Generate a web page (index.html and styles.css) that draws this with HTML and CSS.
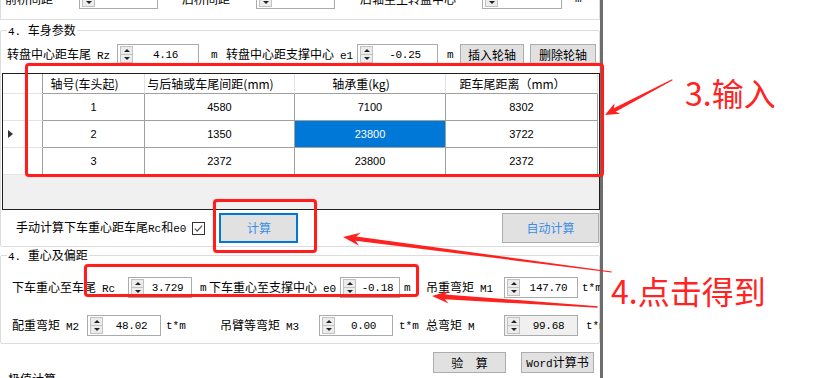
FILE: index.html
```html
<!DOCTYPE html>
<html lang="zh-CN">
<head>
    <meta charset="UTF-8">
    <meta name="viewport" content="width=device-width, initial-scale=1.0">
    <title>车身参数</title>
    <link rel="stylesheet" href="styles.css">
</head>
<body>
<div class="page">

    <div class="app">

        <!-- 上一组，只露出底部 -->
        <div class="group group-cut">
            <div class="row row-cut">
                <span class="lbl w74">前桥间距</span>
                <div class="spin w79"><span class="arrows"><i></i><i></i></span><span class="val"></span></div>
                <span class="lbl w98 pl24">后桥间距</span>
                <div class="spin w79"><span class="arrows"><i></i><i></i></span><span class="val"></span></div>
                <span class="lbl w147 pl25">后轴至主转盘中心</span>
                <div class="spin w80"><span class="arrows"><i></i><i></i></span><span class="val"></span></div>
                <span class="unit pl13">m</span>
            </div>
        </div>

        <!-- 4. 车身参数 -->
        <div class="group g-body">
            <div class="gtitle"><span class="en">4. </span>车身参数</div>
            <div class="row row-rz">
                <span class="lbl w110">转盘中心距车尾<span class="tag">Rz</span></span>
                <div class="spin w82"><span class="arrows"><i></i><i></i></span><span class="val">4.16</span></div>
                <span class="unit w27 pl12">m</span>
                <span class="lbl w131">转盘中心距支撑中心<span class="tag">e1</span></span>
                <div class="spin w81"><span class="arrows"><i></i><i></i></span><span class="val">-0.25</span></div>
                <span class="unit w22 pl9">m</span>
                <button class="btn w64">插入轮轴</button>
                <button class="btn w66 ml6">删除轮轴</button>
            </div>

            <!-- 轮轴表格 -->
            <div class="grid">
                <div class="gr head">
                    <div class="c rh"></div>
                    <div class="c">轴号(车头起)</div>
                    <div class="c">与后轴或车尾间距(mm)</div>
                    <div class="c">轴承重(kg)</div>
                    <div class="c">距车尾距离（mm）</div>
                </div>
                <div class="gr">
                    <div class="c rh"></div>
                    <div class="c">1</div>
                    <div class="c">4580</div>
                    <div class="c">7100</div>
                    <div class="c">8302</div>
                </div>
                <div class="gr">
                    <div class="c rh"><i class="cur"></i></div>
                    <div class="c">2</div>
                    <div class="c">1350</div>
                    <div class="c sel">23800</div>
                    <div class="c">3722</div>
                </div>
                <div class="gr">
                    <div class="c rh"></div>
                    <div class="c">3</div>
                    <div class="c">2372</div>
                    <div class="c">23800</div>
                    <div class="c">2372</div>
                </div>
            </div>

            <div class="row row-calc">
                <span class="lbl">手动计算下车重心距车尾<span class="en">Rc</span>和<span class="en">e0</span></span>
                <svg class="check" width="13" height="13" viewBox="0 0 13 13">
                    <rect x="0.5" y="0.5" width="12" height="12" fill="#fff" stroke="#333"/>
                    <polyline points="2.8,6.6 5.2,9 10.2,3.6" fill="none" stroke="#5a5a5a" stroke-width="1.3"/>
                </svg>
                <button class="btn big focus">计算</button>
                <button class="btn big auto">自动计算</button>
            </div>
        </div>

        <!-- 4. 重心及偏距 -->
        <div class="group g-cg">
            <div class="gtitle"><span class="en">4. </span>重心及偏距</div>
            <div class="row row-m1">
                <span class="lbl w116">下车重心至车尾<span class="tag">Rc</span></span>
                <div class="spin w64"><span class="arrows"><i></i><i></i></span><span class="val">3.729</span></div>
                <span class="unit w17 pl8">m</span>
                <span class="lbl w131">下车重心至支撑中心<span class="tag">e0</span></span>
                <div class="spin w60"><span class="arrows"><i></i><i></i></span><span class="val">-0.18</span></div>
                <span class="unit w26 pl4">m</span>
                <span class="lbl w78">吊重弯矩<span class="tag">M1</span></span>
                <div class="spin w74"><span class="arrows"><i></i><i></i></span><span class="val">147.70</span></div>
                <span class="unit pl4">t*m</span>
            </div>
            <div class="row row-m2">
                <span class="lbl w75">配重弯矩<span class="tag">M2</span></span>
                <div class="spin w74"><span class="arrows"><i></i><i></i></span><span class="val">48.02</span></div>
                <span class="unit w59 pl5">t*m</span>
                <span class="lbl w99">吊臂等弯矩<span class="tag">M3</span></span>
                <div class="spin w74"><span class="arrows"><i></i><i></i></span><span class="val">0.00</span></div>
                <span class="unit w33 pl6">t*m</span>
                <span class="lbl w78">总弯矩<span class="tag">M</span></span>
                <div class="spin w74 ro"><span class="arrows"><i></i><i></i></span><span class="val">99.68</span></div>
                <span class="unit pl8">t*m</span>
            </div>
        </div>

        <div class="row row-btns">
            <button class="btn w73 wide">验 算</button>
            <button class="btn w73 ml15"><span class="en">Word</span>计算书</button>
        </div>

        <div class="group g-max">
            <div class="gtitle">极值计算</div>
        </div>

    </div>

    <!-- 标注 -->
    <div class="marks">
        <div class="mark-box box-grid"></div>
        <div class="mark-box box-calc"></div>
        <div class="mark-box box-result"></div>
        <svg class="pointers" width="820" height="378" viewBox="0 0 820 378">
            <g fill="#ff2020">
                <polygon transform="translate(605 115) rotate(-27.6)" points="0,0 14,-6 11,-2 76,-0.6 76,0.6 11,2 14,6"/>
                <polygon transform="translate(343 237) rotate(7.4)" points="0,0 17,-6.5 13,-2.2 271,-0.5 271,0.5 13,2.2 17,6.5"/>
                <polygon transform="translate(432 296) rotate(3.8)" points="0,0 17,-6.5 13,-2.4 166,-0.8 166,0.8 13,2.4 17,6.5"/>
            </g>
        </svg>
        <div class="note note-input">3.输入</div>
        <div class="note note-click">4.点击得到</div>
    </div>

</div>
</body>
</html>
```

FILE: styles.css
```css
* {
    box-sizing: border-box;
}
body {
    margin: 0;
    background: #fff;
    font-family: "Noto Sans CJK SC", "Liberation Sans", sans-serif;
    font-size: 12px;
    color: #000;
}
.page {
    position: relative;
    width: 820px;
    height: 378px;
    overflow: hidden;
}
.app {
    width: 603px;
    height: 378px;
    border-right: 3px solid #6d6d6d;
    overflow: hidden;
    background: #fff;
}

/* 等宽的英文/数字部分 */
.en, .tag, .unit, .val {
    font-family: "Liberation Mono", "DejaVu Sans Mono", monospace;
    font-size: 11px;
}
.tag {
    margin-left: 6px;
}

/* 分组框 */
.group {
    border: 1px solid #dcdcdc;
    border-radius: 2px;
}
.group-cut {
    height: 20px;
    border-top: 0;
    border-radius: 0;
    overflow: hidden;
}
.gtitle {
    width: fit-content;
    margin: -8px 0 0 6px;
    padding: 0 1px;
    line-height: 14px;
    background: #fff;
    white-space: pre;
}
.g-body {
    margin-top: 10px;
    padding-bottom: 3px;
}
.g-cg {
    margin-top: 8px;
    padding-bottom: 7px;
}
.g-max {
    margin-top: 6px;
    height: 30px;
}

/* 行 */
.row {
    display: flex;
    align-items: center;
    height: 21px;
}
.row-cut { margin-top: -12px; padding-left: 4px; }
.row-rz { margin-top: 5px; padding-left: 6px; }
.row-calc { margin-top: 3px; height: 30px; padding-left: 15px; }
.row-m1 { margin-top: 13px; padding-left: 11px; }
.row-m2 { margin-top: 17px; padding-left: 11px; }
.row-btns { margin-top: 8px; justify-content: flex-end; padding-right: 6px; }

.lbl, .unit {
    flex: none;
    line-height: 14px;
    white-space: nowrap;
}

.w17 { width: 17px; }
.w22 { width: 22px; }
.w26 { width: 26px; }
.w27 { width: 27px; }
.w33 { width: 33px; }
.w59 { width: 59px; }
.w60 { width: 60px; }
.w64 { width: 64px; }
.w66 { width: 66px; }
.w73 { width: 73px; }
.w74 { width: 74px; }
.w75 { width: 75px; }
.w78 { width: 78px; }
.w79 { width: 79px; }
.w80 { width: 80px; }
.w81 { width: 81px; }
.w82 { width: 82px; }
.w98 { width: 98px; }
.w99 { width: 99px; }
.w110 { width: 110px; }
.w116 { width: 116px; }
.w131 { width: 131px; }
.w147 { width: 147px; }
.pl4 { padding-left: 4px; }
.pl5 { padding-left: 5px; }
.pl6 { padding-left: 6px; }
.pl8 { padding-left: 8px; }
.pl9 { padding-left: 9px; }
.pl12 { padding-left: 12px; }
.pl13 { padding-left: 13px; }
.pl24 { padding-left: 24px; }
.pl25 { padding-left: 25px; }
.ml6 { margin-left: 6px; }
.ml15 { margin-left: 15px; }

/* 数字输入框 */
.spin {
    flex: none;
    display: flex;
    align-items: center;
    height: 21px;
    border: 1px solid #ababab;
    background: #fff;
}
.spin.ro {
    background: #f0f0f0;
}
.arrows {
    display: flex;
    flex-direction: column;
    width: 13px;
    height: 17px;
    margin-left: 2px;
    border: 1px solid #c2c2c2;
    background: #ececec;
}
.arrows i {
    flex: 1;
    display: flex;
    align-items: center;
    justify-content: center;
}
.arrows i + i {
    border-top: 1px solid #c2c2c2;
}
.arrows i::after {
    content: "";
    border-left: 3px solid transparent;
    border-right: 3px solid transparent;
    border-bottom: 3px solid #222;
}
.arrows i + i::after {
    border-bottom: 0;
    border-top: 3px solid #222;
}
.val {
    flex: 1;
    text-align: center;
    letter-spacing: -0.3px;
    line-height: 14px;
}

/* 按钮 */
.btn {
    flex: none;
    height: 21px;
    padding: 0;
    border: 1px solid #adadad;
    background: #e1e1e1;
    font: 12px "Noto Sans CJK SC", sans-serif;
    line-height: 1;
    color: #000;
}
.btn.wide {
    word-spacing: 10px;
}
.btn.big {
    height: 30px;
    color: #3a8ee6;
}
.btn.focus {
    width: 79px;
    margin-left: 14px;
    border: 2px solid #0078d7;
}
.btn.auto {
    width: 97px;
    margin-left: auto;
}
.check {
    flex: none;
    display: block;
    margin-left: 6px;
}

/* 表格 */
.grid {
    margin: 8px -1px 0 1px;
    height: 137px;
    border: 1px solid #1f1f1f;
    background: #f0f0f0;
}
.gr {
    display: grid;
    grid-template-columns: 40px 102px 150px 151px 152px;
    height: 27px;
    background: #fff;
}
.gr.head {
    height: 20px;
}
.c {
    display: flex;
    align-items: center;
    justify-content: center;
    border-right: 1px solid #a0a0a0;
    border-bottom: 1px solid #a0a0a0;
    font: 11px "Liberation Sans", sans-serif;
}
.head .c {
    padding-right: 18px;
    border-right-color: #e3e3e3;
    font: 12px "Noto Sans CJK SC", sans-serif;
    white-space: nowrap;
}
.c.rh {
    justify-content: flex-start;
    padding: 0 0 0 5px;
    border-right-color: #a0a0a0;
    border-bottom-color: #e3e3e3;
}
.c.sel {
    background: #0078d7;
    color: #fff;
}
.cur {
    width: 0;
    height: 0;
    border-left: 5px solid #333;
    border-top: 4.5px solid transparent;
    border-bottom: 4.5px solid transparent;
}

/* 标注层 */
.marks {
    position: absolute;
    left: 0;
    top: 0;
    width: 820px;
    height: 378px;
    pointer-events: none;
}
.mark-box {
    position: absolute;
    border: 3px solid #ff1e1e;
    border-radius: 4px;
    box-shadow: 0 0 1px rgba(255, 0, 0, 0.5);
}
.box-grid { left: 25px; top: 63px; width: 579px; height: 114px; }
.box-calc { left: 213px; top: 199px; width: 104px; height: 54px; }
.box-result { left: 84px; top: 264px; width: 335px; height: 33px; }
.pointers {
    position: absolute;
    left: 0;
    top: 0;
}
.note {
    position: absolute;
    color: #ff2323;
    font: 32px/1 "Noto Sans CJK SC", sans-serif;
    white-space: nowrap;
}
.note-input { left: 685px; top: 76px; }
.note-click { left: 611px; top: 274px; }
```
